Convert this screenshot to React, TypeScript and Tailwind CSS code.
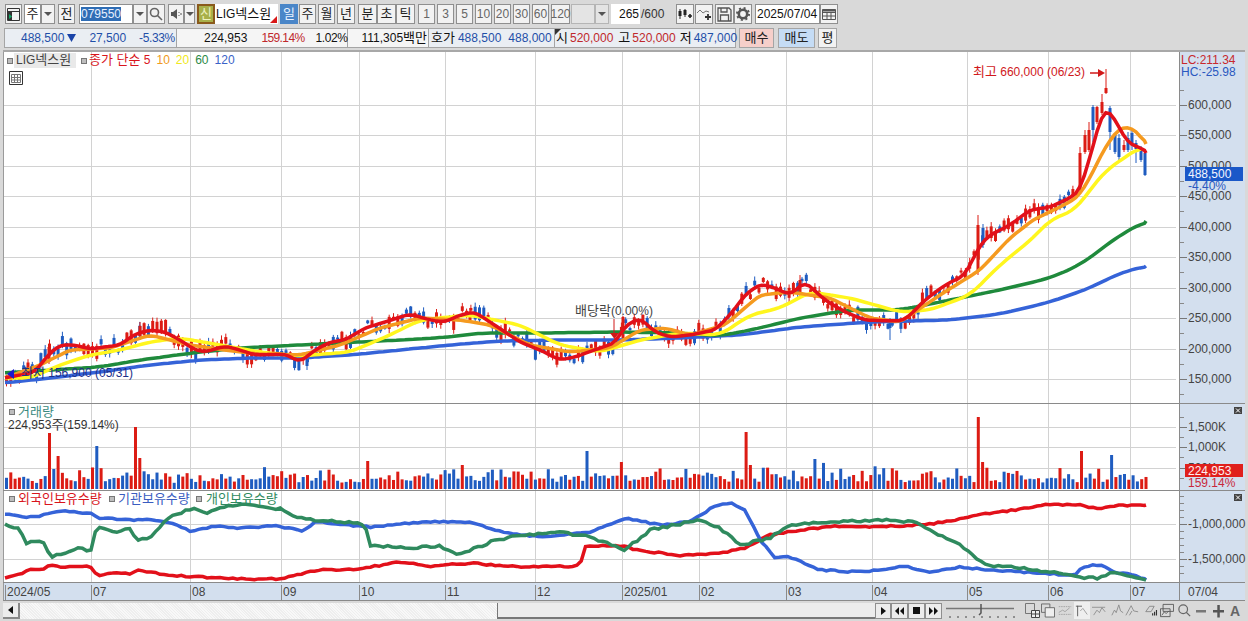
import React from "react";
import { twMerge } from "tailwind-merge";

type P = [number, number];
const RED: P[] = [[5,378],[20,375],[35,372],[48,355],[60,345],[75,345],[90,349],[105,347],[120,345],[135,334],[150,330],[165,332],[180,340],[195,350],[205,352],[225,346],[240,350],[255,355],[285,354],[300,362],[315,350],[330,342],[345,340],[365,328],[385,322],[410,314],[430,320],[445,322],[460,315],[475,312],[490,322],[505,332],[520,342],[540,350],[560,360],[575,357],[600,348],[615,343],[625,326],[640,318],[655,332],[670,337],[690,335],[715,330],[730,315],[745,295],[760,284],[775,288],[790,295],[805,282],[825,300],[845,312],[865,320],[890,321],[905,320],[925,300],[945,285],[965,275],[980,245],[990,235],[1010,225],[1030,210],[1050,207],[1070,198],[1080,190],[1095,140],[1101,115],[1107,110],[1113,115],[1120,130],[1130,145],[1141,147],[1146,153]];
const ORANGE: P[] = [[5,378],[40,365],[70,350],[110,348],[150,335],[190,345],[225,350],[260,354],[300,355],[340,345],[380,328],[420,318],[460,320],[490,325],[530,345],[570,352],[610,348],[640,330],[665,328],[690,335],[725,325],[760,295],[790,292],[830,298],[870,318],[900,322],[940,295],[980,270],[1010,238],[1033,220],[1060,207],[1078,197],[1090,178],[1100,157],[1110,140],[1120,128],[1130,127],[1138,133],[1146,144]];
const YELLOW: P[] = [[5,378],[30,378],[60,365],[90,355],[120,350],[150,342],[180,338],[220,345],[260,352],[300,356],[350,352],[390,335],[420,320],[470,315],[520,325],[560,345],[600,352],[640,340],[680,333],[720,335],[750,315],[780,308],[810,292],[850,298],[900,312],[930,310],[970,295],[1000,265],[1033,238],[1050,220],[1075,210],[1090,190],[1108,168],[1115,165],[1130,153],[1141,148]];
const GREEN: P[] = [[5,373],[50,370],[100,367],[140,360],[200,352],[240,348],[300,345],[400,340],[450,337],[480,333],[540,333],[620,332],[680,333],[720,336],[760,328],[800,318],[850,310],[900,310],[950,300],[1000,290],[1050,278],[1080,265],[1100,250],[1120,235],[1146,221]];
const BLUE: P[] = [[5,383],[50,378],[100,372],[150,365],[200,360],[250,358],[300,358],[350,355],[400,350],[450,345],[500,341],[560,340],[620,340],[680,338],[740,335],[800,327],[870,322],[950,320],[1000,314],[1050,302],[1090,288],[1120,273],[1146,266]];

const INV_BLUE: P[] = [[5,514],[22,517],[40,516],[62,511],[85,513],[90,512],[97,518],[130,520],[150,520],[170,523],[190,531],[200,530],[215,526],[240,528],[260,527],[270,525],[303,531],[315,522],[345,525],[370,527],[420,522],[470,522],[490,529],[510,533],[540,537],[590,532],[625,518],[660,525],[690,522],[715,506],[730,503],[745,510],[760,540],[775,558],[790,557],[820,570],[860,572],[877,570],[905,566],[930,572],[960,567],[990,570],[1020,572],[1050,574],[1075,575],[1082,568],[1092,565],[1103,565],[1112,572],[1125,574],[1135,575],[1146,580]];
const INV_GREEN: P[] = [[5,524],[20,530],[26,543],[43,540],[50,557],[80,548],[90,553],[97,526],[115,532],[130,528],[137,540],[150,537],[170,517],[195,507],[205,513],[230,506],[250,504],[280,509],[305,520],[315,520],[340,521],[365,525],[370,545],[400,548],[440,546],[460,555],[490,542],[520,535],[560,532],[590,537],[625,550],[650,530],[690,522],[700,520],[720,528],[740,545],[770,538],[790,525],[830,522],[880,520],[915,522],[940,535],[960,545],[985,565],[1020,568],[1050,572],[1075,575],[1085,578],[1100,578],[1115,572],[1130,576],[1146,580]];
const INV_RED: P[] = [[5,578],[22,573],[28,570],[45,569],[50,564],[60,567],[80,567],[90,566],[97,576],[115,572],[130,574],[140,570],[165,575],[200,577],[240,579],[280,579],[300,574],[320,570],[360,569],[400,562],[430,566],[470,563],[520,567],[580,566],[585,546],[620,546],[640,550],[680,556],[720,553],[745,548],[770,535],[800,530],[840,526],[880,527],[930,524],[970,517],[990,513],[1030,508],[1050,504],[1080,505],[1100,509],[1115,506],[1146,505]];

const VX = [5, 91, 190, 281, 359, 445, 535, 622, 699, 786, 872, 967, 1048, 1130];
const XL = ["2024/05", "07", "08", "09", "10", "11", "12", "2025/01", "02", "03", "04", "05", "06", "07"];

function rng(seed: number) {
  let a = seed;
  return () => {
    a |= 0; a = (a + 0x6d2b79f5) | 0;
    let t = Math.imul(a ^ (a >>> 15), 1 | a);
    t = (t + Math.imul(t ^ (t >>> 7), 61 | t)) ^ t;
    return ((t ^ (t >>> 14)) >>> 0) / 4294967296;
  };
}
function at(l: P[], x: number) {
  for (let i = 1; i < l.length; i++) {
    if (x <= l[i][0]) {
      const [a, b] = l[i - 1];
      const [c, d] = l[i];
      return b + ((x - a) / (c - a)) * (d - b);
    }
  }
  return l[l.length - 1][1];
}
function smooth(l: P[], win: number) {
  const end = l[l.length - 1][0];
  const out: string[] = [];
  for (let x = l[0][0]; x <= end; x += 4.3) {
    let s = 0, n = 0;
    for (let k = -win; k <= win; k++) {
      const q = Math.min(end, Math.max(l[0][0], x + k * 4.3));
      s += at(l, q); n++;
    }
    out.push(`${x.toFixed(1)},${(s / n).toFixed(1)}`);
  }
  out.push(`${end},${l[l.length - 1][1]}`);
  return out.join(" ");
}
function jitter(l: P[], seed: number, amp: number) {
  const r = rng(seed);
  const end = l[l.length - 1][0];
  const out: string[] = [];
  for (let x = l[0][0]; x <= end; x += 4.3) {
    out.push(`${x.toFixed(1)},${(at(l, x) + (r() - 0.5) * amp).toFixed(1)}`);
  }
  out.push(`${end},${l[l.length - 1][1]}`);
  return out.join(" ");
}

const R = "#dc1c14";
const B = "#1f5cc0";

type C = { x: number; t: number; b: number; hi: number; lo: number; c: string };
function candles(): C[] {
  const r = rng(79550);
  const out: C[] = [];
  for (let x = 6.5; x < 1076; x += 4.3) {
    const mid = at(RED, x) + (r() - 0.5) * 12;
    const h = 2 + r() * 11;
    const up = 0.5 + r() * 4;
    const dn = 0.5 + r() * 4;
    out.push({ x, t: mid - h / 2, b: mid + h / 2, hi: mid - h / 2 - up, lo: mid + h / 2 + dn, c: r() > 0.42 ? R : B });
  }
  const fixed: [number, number, number, number, number, string][] = [
    [49, 347, 362, 345, 364, R],[140, 326, 336, 322, 340, R],[307, 358, 366, 354, 370, B],[470, 312, 320, 308, 322, R],
    [623, 317, 338, 316, 342, R],[800, 280, 292, 275, 296, R],[890, 322, 328, 318, 340, B],[978, 225, 272, 215, 275, R],[983, 228, 245, 224, 248, B],
    [1080, 153, 190, 147, 192, R],[1085, 135, 152, 130, 154, R],[1089, 130, 150, 122, 152, R],[1093, 107, 130, 105, 142, B],[1097, 107, 122, 106, 124, R],
    [1102, 102, 113, 94, 115, R],[1106, 88, 93, 69, 94, R],[1110, 108, 132, 106, 150, B],[1115, 135, 152, 133, 154, B],[1119, 138, 157, 134, 160, B],
    [1124, 145, 150, 140, 152, R],[1128, 138, 150, 132, 152, B],[1132, 133, 143, 130, 150, B],[1136, 143, 149, 140, 163, B],[1141, 148, 160, 146, 162, B],[1145, 153, 175, 152, 176, B],
  ];
  fixed.forEach(([x, t, b, hi, lo, c]) => out.push({ x, t, b, hi, lo, c }));
  return out;
}
const CANDLES = candles();

function volumes() {
  const r = rng(2025);
  const out: { x: number; h: number; c: string }[] = [];
  const spikes: [number, number, string][] = [[49,56,R],[53,20,B],[57,33,R],[95,43,B],[135,62,R],[139,31,R],[368,28,R],[462,24,R],[588,38,B],[620,27,R],[748,57,R],[752,24,R],[813,30,B],[977,72,R],[981,27,R],[1080,38,R],[1110,34,B]];
  for (let x = 6.5; x < 1148; x += 4.3) {
    const s = spikes.find((q) => Math.abs(q[0] - x) < 2.2);
    if (s) out.push({ x, h: s[1], c: s[2] });
    else out.push({ x, h: 6 + r() * r() * 16 + r() * 5, c: r() > 0.48 ? R : B });
  }
  return out;
}
const VOLS = volumes();

function K({ children }: { children: React.ReactNode }) {
  return <span className="text-[13px]">{children}</span>;
}
function Btn({ className = "", children }: { className?: string; children?: React.ReactNode }) {
  return (
    <div className={twMerge("flex h-[20px] shrink-0 items-center justify-center border border-[#8f8f8f] bg-[#f2f2f2] text-[13px] text-[#222]", className)}>{children}</div>
  );
}
function Drop({ className = "" }: { className?: string }) {
  return (
    <Btn className={twMerge("w-[14px]", className)}>
      <svg width="8" height="4"><path d="M0 0h8L4 4z" fill="#555" /></svg>
    </Btn>
  );
}
function Sq({ className = "" }: { className?: string }) {
  return <span className={"absolute h-[6px] w-[6px] border border-[#777] bg-[#bdbdbd] " + className} />;
}
function CloseX({ className = "" }: { className?: string }) {
  return (
    <svg width="8" height="7" className={"absolute " + className}>
      <rect width="8" height="7" fill="#444" />
      <path d="M2 1.5l4 4M6 1.5l-4 4" stroke="#fff" strokeWidth="1" />
    </svg>
  );
}
function Grid({ ys }: { ys: number[] }) {
  return (
    <g stroke="#d2d2d2" strokeWidth="1">
      {VX.slice(1).map((x) => <line key={x} x1={x + 0.5} x2={x + 0.5} y1="0" y2="621" />)}
      {ys.map((y) => <line key={y} x1="0" x2="1176" y1={y + 0.5} y2={y + 0.5} />)}
    </g>
  );
}
function Ticks({ major, minor, top, bottom }: { major: number[]; minor: number[]; top: number; bottom: number }) {
  return (
    <svg width="66" height={bottom - top} viewBox={`1179 ${top} 66 ${bottom - top}`} className="absolute left-0 top-0">
      {major.map((y) => <line key={y} x1="1179" x2="1186" y1={y + 0.5} y2={y + 0.5} stroke="#777" />)}
      {minor.map((y) => <line key={y} x1="1179" x2="1183" y1={y + 0.5} y2={y + 0.5} stroke="#888" />)}
    </svg>
  );
}

const MAIN_Y = [105, 135, 166, 196, 227, 257, 288, 318, 349, 379];
const AX = "absolute left-[8px] leading-[14px] text-[#444]";

export default function App() {
  return (
    <div className="flex h-[621px] w-[1248px] flex-col overflow-hidden bg-[#d9d9d9] text-[12px] leading-[14px] [font-family:'Liberation_Sans','Noto_Sans_CJK_KR',sans-serif]">
      {/* row 1 */}
      <div className="ml-[5px] mt-[4px] flex h-[20px] items-center">
        <Btn className="w-[17px]">
          <svg width="13" height="13"><path d="M.5.5h12v12H.5z M.5 3.5h12 M4.5 3.5v9" fill="none" stroke="#333" /><path d="M1 4h3v8H1z" fill="#333" /><path d="M2 6l3 2.5L2 11z" fill="#1a6" /></svg>
        </Btn>
        <Btn className="ml-[2px] w-[17px] bg-white">주</Btn>
        <Drop />
        <Btn className="ml-[3px] w-[17px]">전</Btn>
        <div className="ml-[4px] flex h-[20px] w-[54px] items-center border border-[#8f8f8f] bg-white pl-[1px]">
          <span className="bg-[#2f6db5] text-[#e8f0ff]">079550</span>
        </div>
        <Drop />
        <Btn className="w-[18px]">
          <svg width="14" height="14" fill="none" stroke="#666" strokeWidth="1.6"><circle cx="5.5" cy="5.5" r="4" /><path d="M8.5 8.5L13 13" /></svg>
        </Btn>
        <Btn className="ml-[3px] w-[16px]">
          <svg width="13" height="12"><path d="M1 4h2l4-3v10L3 8H1z" fill="#555" /><path d="M9 4v1M9 7v1M11 5v2" stroke="#555" /></svg>
        </Btn>
        <Drop className="w-[11px]" />
        <div className="ml-[2px] flex h-[20px] w-[18px] shrink-0 items-center justify-center border-2 border-[#8a5a1c] bg-[#a8b04a] text-[13px] text-[#eef2c0]">신</div>
        <div className="relative flex h-[20px] w-[63px] shrink-0 items-center bg-white pl-[1px] text-[#111]">
          LIG<K>넥스원</K>
          <span className="absolute bottom-[1px] right-[1px] h-0 w-0 border-b-[7px] border-l-[7px] border-b-[#d81818] border-l-transparent" />
        </div>
        <Btn className="ml-[2px] w-[18px] border-[#4a86c8] bg-[#4a86c8] text-[#e9f2ff]">일</Btn>
        <Btn className="ml-[1px] w-[17px]">주</Btn>
        <Btn className="ml-[2px] w-[17px]">월</Btn>
        <Btn className="ml-[2px] w-[18px]">년</Btn>
        <Btn className="ml-[3px] w-[19px]">분</Btn>
        <Btn className="w-[19px]">초</Btn>
        <Btn className="w-[19px]">틱</Btn>
        <Btn className="ml-[3px] w-[17px] text-[12px] text-[#666]">1</Btn>
        <Btn className="ml-[2px] w-[17px] text-[12px] text-[#666]">3</Btn>
        <Btn className="ml-[2px] w-[17px] text-[12px] text-[#666]">5</Btn>
        <Btn className="ml-[2px] w-[17px] text-[12px] text-[#666]">10</Btn>
        <Btn className="ml-[2px] w-[17px] text-[12px] text-[#666]">20</Btn>
        <Btn className="ml-[2px] w-[17px] text-[12px] text-[#666]">30</Btn>
        <Btn className="ml-[2px] w-[17px] text-[12px] text-[#666]">60</Btn>
        <Btn className="ml-[2px] w-[19px] text-[12px] text-[#666]">120</Btn>
        <div className="ml-[1px] h-[20px] w-[24px] shrink-0 border border-[#b5b5b5] bg-[#e4e4e4]" />
        <Drop className="bg-[#e4e4e4] border-[#b5b5b5]" />
        <div className="ml-[2px] flex h-[20px] w-[29px] shrink-0 items-center justify-end bg-white pr-[1px] text-[#111]">265</div>
        <span className="ml-[1px] w-[26px] shrink-0 text-[#333]">/600</span>
        <Btn className="ml-[9px] w-[18px]">
          <svg width="16" height="14"><path d="M3 2v10M8 2v8" stroke="#222" /><path d="M1.5 4h3v5h-3zM6.5 3h3v5h-3z" fill="#222" /><path d="M11 9h4M13 7v4" stroke="#222" strokeWidth="1.6" /></svg>
        </Btn>
        <Btn className="ml-[1px] w-[18px]">
          <svg width="16" height="14" fill="none"><path d="M1 6l3-3 3 3 3-2 3 1" stroke="#777" /><path d="M9 10h6M12 7v6" stroke="#333" strokeWidth="1.8" /></svg>
        </Btn>
        <Btn className="ml-[2px] w-[19px]">
          <svg width="15" height="15" fill="none" stroke="#555" strokeWidth="1.3"><path d="M1 1h11l2 2v11H1z" /><path d="M4 1v4h6V1M3.500 14V8h8v6" /></svg>
        </Btn>
        <Btn className="w-[18px]">
          <svg width="14" height="14"><circle cx="7" cy="7" r="4.200" fill="none" stroke="#555" strokeWidth="2.600" /><circle cx="7" cy="7" r="6" fill="none" stroke="#555" strokeWidth="2" strokeDasharray="2 2.700" /></svg>
        </Btn>
        <div className="ml-[3px] flex h-[20px] w-[65px] shrink-0 items-center border border-[#8f8f8f] bg-white pl-[1px] text-[#111]">2025/07/04</div>
        <Btn className="w-[18px]">
          <svg width="14" height="12" fill="none" stroke="#555"><path d="M.5 1.500h13v10H.5zM.5 4.500h13M5 4.500v7M9 4.500v7M.5 8h13" /><path d="M.5 2.500h13" strokeWidth="2" /></svg>
        </Btn>
      </div>
      {/* row 2 */}
      <div className="ml-[4px] mt-[4px] flex h-[20px] items-center">
        <div className="flex h-[20px] w-[172px] shrink-0 items-center border-y border-l border-[#a5a5a5] bg-[#eaeef3]">
          <span className="ml-[16px] text-[#1f4fa8]">488,500</span>
          <svg width="9" height="8" className="ml-[3px]"><path d="M0 0h9L4.500 8z" fill="#1a44a8" /></svg>
          <span className="ml-[13px] text-[#1f4fa8]">27,500</span>
          <span className="ml-[13px] tracking-[-0.4px] text-[#1f4fa8]">-5.33%</span>
        </div>
        <div className="relative flex h-[20px] w-[171px] shrink-0 items-center border-y border-l border-[#a5a5a5] bg-[#f5f5f5]">
          <span className="ml-[27px] text-[#111]">224,953</span>
          <span className="ml-[14px] tracking-[-0.6px] text-[#c0282c]">159.14%</span>
          <span className="ml-[11px] tracking-[-0.4px] text-[#111]">1.02%</span>
        </div>
        <div className="flex h-[20px] w-[81px] shrink-0 items-center justify-end border-y border-l border-[#a5a5a5] bg-[#f5f5f5] pr-[1px] text-[#111]">111,305<K>백만</K></div>
        <div className="flex h-[20px] w-[126px] shrink-0 items-center border-y border-l border-[#a5a5a5] bg-[#eaeef3] pl-[2px]">
          <span className="text-[#111]"><K>호가</K></span>
          <span className="ml-[3px] text-[#1f4fa8]">488,500</span>
          <span className="ml-[7px] text-[#1f4fa8]">488,000</span>
        </div>
        <div className="relative flex h-[20px] w-[182px] shrink-0 items-center border border-[#a5a5a5] bg-[#eaeef3] pl-[1px]">
          <span className="absolute left-0 top-0 h-0 w-0 border-r-[6px] border-t-[6px] border-r-transparent border-t-[#333]" />
          <span className="text-[#111]"><K>시</K></span>
          <span className="ml-[2px] text-[#c0282c]">520,000</span>
          <span className="ml-[5px] text-[#111]"><K>고</K></span>
          <span className="ml-[2px] text-[#c0282c]">520,000</span>
          <span className="ml-[4px] text-[#111]"><K>저</K></span>
          <span className="ml-[2px] text-[#1f4fa8]">487,000</span>
        </div>
        <div className="ml-[3px] flex h-[20px] w-[35px] shrink-0 items-center justify-center border border-[#a5a5a5] bg-[#f6cfca] text-[#222]"><K>매수</K></div>
        <div className="ml-[4px] flex h-[20px] w-[37px] shrink-0 items-center justify-center border border-[#a5a5a5] bg-[#c5dcf5] text-[#222]"><K>매도</K></div>
        <div className="ml-[3px] flex h-[20px] w-[19px] shrink-0 items-center justify-center border border-[#a5a5a5] bg-[#f2f2f2] text-[#222]"><K>평</K></div>
      </div>

      {/* chart */}
      <div className="ml-[3px] mt-[2px] w-[1242px] border-t-2 border-[#a8a8a8]">
        {/* price pane */}
        <div className="flex h-[352px] border-b border-[#8a8a8a]">
          <div className="relative w-[1176px] border-l border-[#9a9a9a] bg-white">
            <svg width="1175" height="351" viewBox="4 52 1175 351" className="absolute left-0 top-0">
              <Grid ys={MAIN_Y} />
              {CANDLES.map((c, i) => (
                <g key={i} fill={c.c} stroke={c.c}>
                  <line x1={c.x} x2={c.x} y1={c.hi} y2={c.lo} strokeWidth="1" />
                  <rect x={c.x - 1.5} y={c.t} width="3" height={c.b - c.t} stroke="none" />
                </g>
              ))}
              <polyline points={smooth(BLUE, 3)} fill="none" stroke="#3563d8" strokeWidth="3.5" />
              <polyline points={smooth(GREEN, 3)} fill="none" stroke="#1f8a3c" strokeWidth="3.5" />
              <polyline points={smooth(YELLOW, 2)} fill="none" stroke="#fff61e" strokeWidth="3.5" />
              <polyline points={smooth(ORANGE, 1)} fill="none" stroke="#f59a1f" strokeWidth="3.5" />
              <polyline points={smooth(RED, 1)} fill="none" stroke="#e2101a" strokeWidth="3.5" />
              <path d="M614 319v14" stroke="#d01818" strokeWidth="1" />
              <path d="M610 333h9l-4.500 6z" fill="#d01818" />
              <path d="M1090 73h10" stroke="#d01818" strokeWidth="1.500" />
              <path d="M1098 69l7 4-7 4z" fill="#d01818" />
              <path d="M14 369v10l-7-5z" fill="#1a1ad0" />
            </svg>
            <Sq className="left-[3px] top-[6px]" />
            <div className="absolute left-[10px] top-[1px] h-[15px] w-[62px] bg-[#e9e9e9] pl-[2px] text-[#444]">LIG<K>넥스원</K></div>
            <Sq className="left-[77px] top-[6px]" />
            <div className="absolute left-[85px] top-[1px] flex gap-[6px] whitespace-nowrap">
              <span className="text-[#d8141c]"><K>종가 단순</K> 5</span>
              <span className="text-[#f09a20]">10</span>
              <span className="text-[#f0e820]">20</span>
              <span className="text-[#2b8a46]">60</span>
              <span className="text-[#3a62c8]">120</span>
            </div>
            <svg width="14" height="14" className="absolute left-[5px] top-[19px]" fill="none" stroke="#333"><path d="M.5.5h13v13H.5z" /><path d="M2.500 3.500h9v8h-9zM2.500 6.500h9M2.500 9h9M5.500 3.500v8M8.500 3.500v8" stroke="#777" /></svg>
            <span className="absolute left-[969px] top-[13px] whitespace-nowrap text-[#d0181c]"><K>최고</K> 660,000 (06/23)</span>
            <span className="absolute left-[571px] top-[252px] whitespace-nowrap text-[#444]"><K>배당락</K>(0.00%)</span>
            <span className="absolute left-[17px] top-[314px] whitespace-nowrap text-[#1c2f88]"><K>최저</K> 156,900 (05/31)</span>
          </div>
          <div className="relative flex-1 border-l border-[#8a8a8a] bg-[#d3dfee]">
            <Ticks top={52} bottom={403} major={MAIN_Y} minor={[90, 120, 150, 181, 211, 242, 272, 303, 333, 364, 394]} />
            <span className="absolute left-[1px] top-[1px] text-[#c8282c]">LC:211.34</span>
            <span className="absolute left-[1px] top-[13px] text-[#2a58c0]">HC:-25.98</span>
            {["600,000","550,000","500,000","450,000","400,000","350,000","300,000","250,000","200,000","150,000"].map((t, i) => (
              <span key={t} className={AX} style={{ top: MAIN_Y[i] - 52 - 7 }}>{t}</span>
            ))}
            <div className="absolute left-[5px] top-[115px] h-[14px] w-[58px] bg-[#1a58c8] pl-[3px] text-[#f2f6ff]">488,500</div>
            <span className="absolute left-[8px] top-[127px] text-[#2a58c0]">-4.40%</span>
          </div>
        </div>

        {/* volume pane */}
        <div className="flex h-[87px] border-b border-[#8a8a8a]">
          <div className="relative w-[1176px] border-l border-[#9a9a9a] bg-white">
            <svg width="1175" height="86" viewBox="4 404 1175 86" className="absolute left-0 top-0">
              <Grid ys={[427, 447, 468]} />
              {VOLS.map((v, i) => <rect key={i} x={v.x - 1.5} y={489 - v.h} width="3" height={v.h} fill={v.c} />)}
            </svg>
            <Sq className="left-[5px] top-[5px]" />
            <span className="absolute left-[14px] top-[1px] text-[#3a8a80]"><K>거래량</K></span>
            <span className="absolute left-[4px] top-[14px] whitespace-nowrap text-[#333]">224,953<K>주</K>(159.14%)</span>
          </div>
          <div className="relative flex-1 border-l border-[#8a8a8a] bg-[#d3dfee]">
            <Ticks top={404} bottom={490} major={[427, 447, 468]} minor={[417, 437, 457, 478]} />
            <CloseX className="left-[54px] top-[3px]" />
            <span className={AX} style={{ top: 16 }}>1,500K</span>
            <span className={AX} style={{ top: 36 }}>1,000K</span>
            <span className={AX} style={{ top: 57 }}>500K</span>
            <div className="absolute left-[5px] top-[60px] h-[13px] w-[58px] bg-[#e0201c] pl-[3px] text-[#fff0f0]">224,953</div>
            <span className="absolute left-[8px] top-[72px] text-[#c8283c]">159.14%</span>
          </div>
        </div>

        {/* investor pane */}
        <div className="flex h-[92px] border-b border-[#8a8a8a]">
          <div className="relative w-[1176px] border-l border-[#9a9a9a] bg-white">
            <svg width="1175" height="91" viewBox="4 491 1175 91" className="absolute left-0 top-0">
              <Grid ys={[524, 559]} />
              <polyline points={jitter(INV_RED, 11, 1.6)} fill="none" stroke="#e2101a" strokeWidth="3.5" />
              <polyline points={jitter(INV_BLUE, 22, 1.6)} fill="none" stroke="#3563d8" strokeWidth="3.5" />
              <polyline points={jitter(INV_GREEN, 33, 2.4)} fill="none" stroke="#2f8a5e" strokeWidth="3.5" />
            </svg>
            <Sq className="left-[5px] top-[5px]" />
            <span className="absolute left-[14px] top-[1px] whitespace-nowrap text-[#d8141c]"><K>외국인보유수량</K></span>
            <Sq className="left-[105px] top-[5px]" />
            <span className="absolute left-[114px] top-[1px] whitespace-nowrap text-[#3a5cc0]"><K>기관보유수량</K></span>
            <Sq className="left-[192px] top-[5px]" />
            <span className="absolute left-[202px] top-[1px] whitespace-nowrap text-[#2f8a5e]"><K>개인보유수량</K></span>
          </div>
          <div className="relative flex-1 border-l border-[#8a8a8a] bg-[#d3dfee]">
            <Ticks top={491} bottom={582} major={[524, 559]} minor={[496, 503, 510, 517, 531, 538, 545, 552, 566, 573]} />
            <CloseX className="left-[54px] top-[3px]" />
            <span className={AX} style={{ top: 26 }}>-1,000,000</span>
            <span className={AX} style={{ top: 61 }}>-1,500,000</span>
          </div>
        </div>

        {/* x axis */}
        <div className="flex h-[18px] border-b border-[#8a8a8a]">
          <div className="relative w-[1176px] border-l border-[#9a9a9a] bg-[#d3dfee]">
            {XL.map((t, i) => (
              <span key={i} className="absolute top-[2px] h-[15px] border-l border-[#8a8a8a] pl-[1px] leading-[14px] text-[#444]" style={{ left: VX[i] - 4 }}>{t}</span>
            ))}
          </div>
          <div className="flex-1 border-l border-[#8a8a8a] bg-[#d3dfee] pl-[8px] pt-[2px] text-[#444]">07/04</div>
        </div>

        {/* scrollbar */}
        <div className="mt-[1px] flex h-[17px] items-center">
          <div className="flex h-[16px] w-[17px] shrink-0 items-center justify-center border-b-2 border-r-2 border-[#888] bg-[#ececec]">
            <svg width="5" height="8"><path d="M5 0v8L0 4z" fill="#111" /></svg>
          </div>
          <div className="h-[16px] w-[477px] shrink-0 bg-[repeating-linear-gradient(45deg,#eeeeee_0_1px,#f8f8f8_1px_2px)]" />
          <div className="h-[16px] w-[378px] shrink-0 border-b-2 border-l border-[#777] bg-[#ececec]" />
          <Btn className="h-[16px] w-[16px] bg-[#ececec]"><svg width="5" height="8"><path d="M0 0v8l5-4z" fill="#111" /></svg></Btn>
          <Btn className="h-[16px] w-[17px] bg-[#ececec]"><svg width="9" height="8" fill="#111"><path d="M4 0v8L0 4zM9 0v8L5 4z" /></svg></Btn>
          <Btn className="h-[16px] w-[17px] bg-[#ececec]"><svg width="7" height="7" fill="#111"><rect width="7" height="7" /></svg></Btn>
          <Btn className="h-[16px] w-[17px] bg-[#ececec]"><svg width="9" height="8" fill="#111"><path d="M0 0v8l4-4zM5 0v8l4-4z" /></svg></Btn>
          <svg width="72" height="16" className="ml-[4px] shrink-0">
            <path d="M0 5.500h68" stroke="#777" strokeWidth="1.500" />
            <path d="M35 1v9l-2 2" stroke="#555" strokeWidth="1.500" fill="none" />
            <path d="M4 13v2M12 13v2M20 13v2M28 13v2M36 13v2M44 13v2M52 13v2M60 13v2M68 13v2" stroke="#444" />
          </svg>
          <div className="ml-[7px] flex items-center">
            <svg width="15" height="15" fill="none" stroke="#777"><path d="M.5.500h9v10h-9z" /><path d="M6.500 7.500h8v7h-8zM10.500 7.500v7M6.500 11h8" stroke="#444" fill="#eee" /></svg>
            <svg width="14" height="15" viewBox="0 0 15 15" className="ml-[1px]" fill="none" stroke="#666"><path d="M.5.500h9v9h-9z" /><path d="M4.500 4.500h10v10h-10z" fill="#eee" /></svg>
            <svg width="14" height="15" viewBox="0 0 18 15" className="ml-[3px]" fill="none" stroke="#999"><path d="M1 2.500h16M1 12.500h16" strokeDasharray="2 1" /><path d="M1 10l5-3 3 2 6-5" /></svg>
            <div className="ml-[2px] flex h-[17px] w-[16px] shrink-0 items-center justify-center bg-[#efefef]">
              <svg width="14" height="14" viewBox="0 0 16 14" fill="none" stroke="#555"><path d="M1 1.500h7M3 1v12" /><path d="M6 7l3-3 5 7" stroke="#999" /></svg>
            </div>
            <svg width="14" height="14" viewBox="0 0 17 14" className="ml-[2px]" fill="none" stroke="#888"><path d="M0 2.500h16M2 12L6 6l3 3 3-6 4 5" /></svg>
            <svg width="13" height="15" viewBox="0 0 15 15" className="ml-[5px]" fill="none" stroke="#888"><path d="M1 13l3-6 2 3 3-9 2 7 3 2" /></svg>
            <svg width="14" height="15" viewBox="0 0 16 15" className="ml-[1px]" fill="none" stroke="#888"><path d="M1 13L7 2l3 6 5 1M5 13l3-5" /></svg>
            <svg width="13" height="15" viewBox="0 0 17 15" className="ml-[6px]" fill="none" stroke="#777"><path d="M1 9l5-7h6l-4 7z" /><path d="M10 14v-3M12.500 14v-5M15 14v-7" stroke="#333" strokeWidth="1.500" /></svg>
            <svg width="14" height="15" viewBox="0 0 16 15" className="ml-[2px]" fill="none" stroke="#555"><path d="M3.500.500h12v8h-12z" /><path d="M.5 5.500h11v9H.5zM2 13l3-4 2 2 3-3" /></svg>
            <svg width="13" height="15" viewBox="0 0 15 15" className="ml-[4px]" fill="none" stroke="#666" strokeWidth="1.400"><circle cx="6" cy="6" r="5" /><path d="M9.500 9.500L14 14" /></svg>
            <svg width="10" height="15" className="ml-[5px]"><rect y="7" width="10" height="2.500" fill="#777" /></svg>
            <svg width="11" height="15" className="ml-[7px]"><path d="M0 7h11v2.500H0zM4.300 2h2.500v12.500H4.300z" fill="#555" /></svg>
            <span className="ml-[6px] text-[14px] font-bold text-[#666]">A</span>
          </div>
        </div>
      </div>
    </div>
  );
}
